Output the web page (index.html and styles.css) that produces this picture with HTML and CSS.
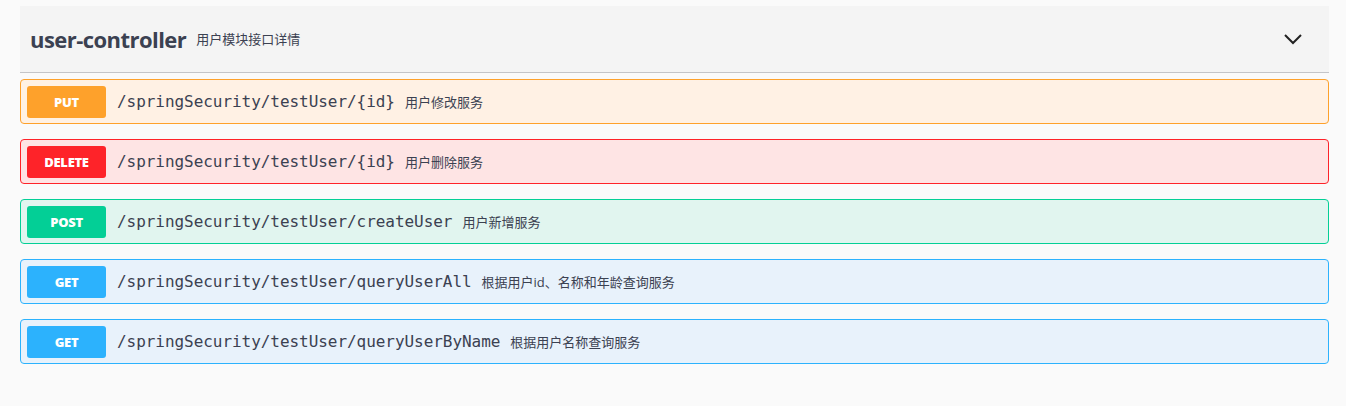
FILE: index.html
```html
<!DOCTYPE html>
<html>
<head>
<meta charset="utf-8">
<link rel="stylesheet" href="styles.css">
</head>
<body>
<div class="wrapper">
  <div class="tag-section">
    <div class="tag-header">
      <span class="tag-title">user-controller</span>
      <span class="tag-desc">用户模块接口详情</span>
      <span class="spacer"></span>
      <svg class="chevron" width="20" height="20" viewBox="0 0 20 20"><path d="M2 6 L10 14 L18 6" fill="none" stroke="#222" stroke-width="2"/></svg>
    </div>
    <div class="ops">
      <div class="op op-put">
        <span class="method">PUT</span>
        <span class="path">/springSecurity/testUser/{id}</span>
        <span class="summary">用户修改服务</span>
      </div>
      <div class="op op-delete">
        <span class="method">DELETE</span>
        <span class="path">/springSecurity/testUser/{id}</span>
        <span class="summary">用户删除服务</span>
      </div>
      <div class="op op-post">
        <span class="method">POST</span>
        <span class="path">/springSecurity/testUser/createUser</span>
        <span class="summary">用户新增服务</span>
      </div>
      <div class="op op-get">
        <span class="method">GET</span>
        <span class="path">/springSecurity/testUser/queryUserAll</span>
        <span class="summary">根据用户id、名称和年龄查询服务</span>
      </div>
      <div class="op op-get">
        <span class="method">GET</span>
        <span class="path">/springSecurity/testUser/queryUserByName</span>
        <span class="summary">根据用户名称查询服务</span>
      </div>
    </div>
  </div>
</div>
</body>
</html>
```
FILE: styles.css
```css
html, body {
  margin: 0;
  padding: 0;
  background: #fafafa;
}
body {
  font-family: "Open Sans", "Noto Sans CJK SC", sans-serif;
  color: #3b4151;
}
.wrapper {
  padding: 6px 17px 0 20px;
}
.tag-header {
  display: flex;
  align-items: center;
  padding: 0 26px 0 10px;
  background: #f4f4f4;
  border-bottom: 1px solid #c4c5c8;
  box-sizing: border-box;
  height: 67px;
}
.tag-title {
  font-size: 22px;
  font-weight: 700;
  color: #3b4151;
  letter-spacing: -0.55px;
}
.tag-desc {
  font-size: 13px;
  margin-left: 10px;
  color: #3b4151;
  margin-top: -2px;
}
.spacer { flex: 1; }
.chevron { display: block; }
.ops {
  display: flex;
  flex-direction: column;
  gap: 15px;
  padding-top: 6px;
}
.op {
  display: flex;
  align-items: center;
  height: 45px;
  box-sizing: border-box;
  border: 1px solid;
  border-radius: 4px;
  padding: 0 6px;
}
.method {
  width: 79px;
  height: 32px;
  line-height: 32px;
  border-radius: 3px;
  text-align: center;
  color: #fff;
  font-size: 13px;
  font-weight: 800;
  letter-spacing: -0.3px;
}
.path {
  font-family: "DejaVu Sans Mono", monospace;
  font-size: 16px;
  font-weight: 400;
  color: #3b4151;
  margin-left: 11px;
  letter-spacing: -0.05px;
}
.summary {
  font-size: 13px;
  margin-left: 10px;
  color: #3b4151;
}
.op-put { background: #fff1e4; border-color: #fea12b; }
.op-put .method { background: #fea12b; }
.op-delete { background: #fee4e4; border-color: #fe2329; }
.op-delete .method { background: #fe2329; }
.op-post { background: #e1f5ef; border-color: #03cf96; }
.op-post .method { background: #03cf96; }
.op-get { background: #e8f2fb; border-color: #2cb2fd; }
.op-get .method { background: #2cb2fd; }
```
